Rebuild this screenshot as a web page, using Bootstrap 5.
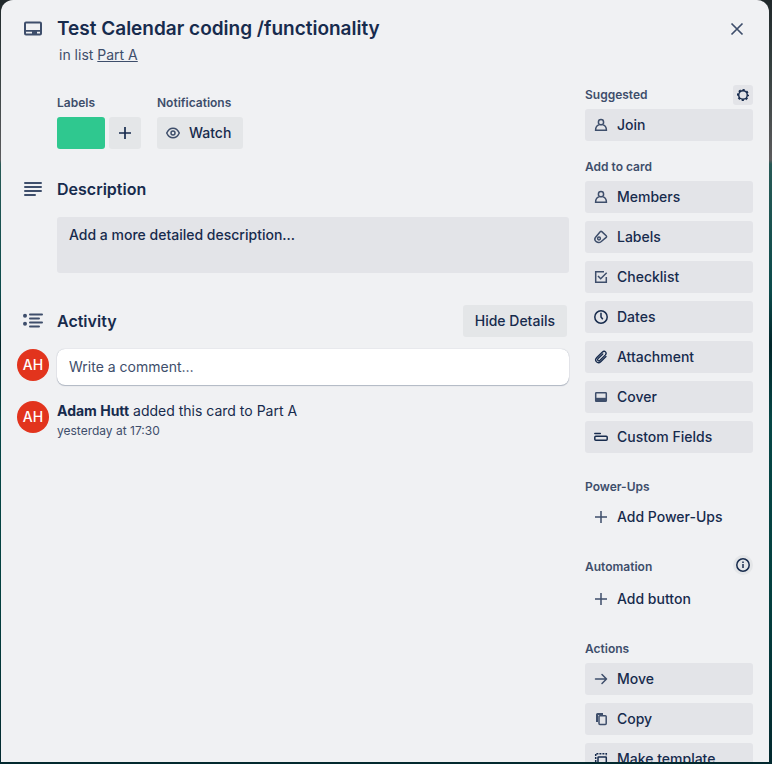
<!DOCTYPE html>
<html lang="en">
<head>
<meta charset="utf-8">
<meta name="viewport" content="width=device-width, initial-scale=1">
<title>Test Calendar coding /functionality</title>
<link rel="stylesheet" href="https://cdn.jsdelivr.net/npm/bootstrap@5.3.0/dist/css/bootstrap.min.css">
<style>
:root { --ink: #172b4d; --soft: #3e4e6b; --fill: #e3e4e8; }
body { font-family: Inter, "Liberation Sans", sans-serif; font-size: 14px; line-height: 20px; color: var(--ink);
  background: linear-gradient(180deg, #20282a 0, #35403f 65px, #5b5b5d 160px, #285a56 164px, #0c4b4b 290px, #02272b 345px, #064746 420px, #04403f 600px, #03292f 100%); }
.page { height: 100vh; padding: 0 3px 2px 1px; overflow: hidden; }
.dialog-card { height: 100%; background: #f0f1f3; border-radius: 12px 12px 0 0; padding: 17px 16px 0; overflow: hidden; }
.gutter { width: 40px; flex: none; }
.gutter-icon { padding-left: 4px; }
.card-title-text { font-size: 19px; line-height: 24px; font-weight: 600; margin: 0; }
.card-sub { line-height: 20px; padding: 4px 0 0 2px; color: var(--soft); }
.card-sub a { color: inherit; }
.close-btn { width: 32px; height: 32px; margin-top: -4px; }
.side { width: 168px; flex: none; padding-top: 20px; }
.cap { font-size: 12px; line-height: 20px; font-weight: 600; color: var(--soft); margin: 0; }
.btn-soft { --bs-btn-font-size: 14px; --bs-btn-line-height: 20px; --bs-btn-font-weight: 500; --bs-btn-color: var(--ink); --bs-btn-bg: var(--fill);
  --bs-btn-hover-bg: #d5d8de; --bs-btn-hover-color: var(--ink); --bs-btn-border-width: 0; --bs-btn-border-radius: 3px; --bs-btn-padding-y: 6px; --bs-btn-padding-x: 12px; }
.btn-bare { --bs-btn-bg: transparent; }
.btn-side { --bs-btn-padding-x: 8px; width: 100%; display: flex; align-items: center; gap: 8px; white-space: nowrap; }
.btn-main { --bs-btn-bg: #e4e6e8; }
.mini { width: 20px; height: 20px; padding: 0; display: flex; align-items: center; justify-content: center; }
.icon { display: block; flex: none; fill: none; stroke: var(--soft); stroke-width: 1.5; }
.dark { stroke: var(--ink); }
.fields { padding: 28px 0 0 40px; gap: 16px; }
.swatch { width: 48px; height: 32px; --bs-btn-bg: #2fc88f; --bs-btn-hover-bg: #28b580; }
.watch { padding-right: 12px; }
.sect { font-size: 16px; line-height: 32px; font-weight: 600; margin: 0; }
.desc { display: block; min-height: 56px; padding: 8px 12px; background: var(--fill); border-radius: 3px; font-weight: 500; color: var(--ink); text-decoration: none; }
.hide-details { margin-right: 2px; }
.comment-row { padding-top: 12px; }
.face { width: 32px; height: 32px; background: #e2341d; color: #fff; font-weight: 500; }
.comment-box { height: 36px; font-size: 14px; line-height: 20px; padding: 7px 12px 9px; border: 0; border-radius: 8px; color: var(--ink); box-shadow: 0 1px 1px #091e4240, 0 0 1px #091e424f; }
.comment-box::placeholder { color: var(--soft); opacity: 1; }
.stamp { font-size: 12px; line-height: 20px; color: var(--soft); }
.power { margin-bottom: 22px; }
.auto-row { height: 22px; margin-bottom: 6px; }
</style>
</head>
<body>
<div class="page">
<main class="dialog-card">
  <header class="d-flex">
    <div class="gutter gutter-icon">
      <svg class="icon" width="24" height="24" viewBox="0 0 24 24"><path fill="#3e4e6b" stroke="none" fill-rule="evenodd" d="M5 4.500h14a2 2 0 0 1 2 2v10a2 2 0 0 1-2 2H5a2 2 0 0 1-2-2v-10a2 2 0 0 1 2-2zm0 2V13h14V6.500zm0 8.200v1.800h6v-1.800zm11 0v1.800h3v-1.800z"/></svg>
    </div>
    <div class="flex-grow-1">
      <h1 class="card-title-text">Test Calendar coding /functionality</h1>
      <div class="card-sub">in list <a href="#">Part A</a></div>
    </div>
    <button class="btn btn-soft btn-bare close-btn p-0 d-flex align-items-center justify-content-center" aria-label="Close">
      <svg class="icon" width="16" height="16" viewBox="0 0 16 16"><path stroke-width="1.700" d="M2.500 2.500l11 11M13.500 2.500l-11 11"/></svg>
    </button>
  </header>
  <div class="d-flex gap-3">
    <div class="flex-grow-1">
      <div class="d-flex fields">
        <section>
          <h2 class="cap">Labels</h2>
          <div class="d-flex gap-1 pt-1">
            <button class="btn btn-soft swatch" aria-label="Green label"></button>
            <button class="btn btn-soft btn-main px-2" aria-label="Add label"><svg class="icon dark" width="16" height="16" viewBox="0 0 16 16"><path stroke-width="1.700" d="M8 2v12M2 8h12"/></svg></button>
          </div>
        </section>
        <section>
          <h2 class="cap">Notifications</h2>
          <div class="pt-1">
            <button class="btn btn-soft btn-main btn-side watch">
              <svg class="icon" width="16" height="16" viewBox="0 0 16 16"><path d="M1.700 8C3 5.200 5.300 3.200 8 3.200S13 5.200 14.300 8C13 10.800 10.700 12.800 8 12.800S3 10.800 1.700 8z"/><circle cx="8" cy="8" r="2"/></svg>Watch
            </button>
          </div>
        </section>
      </div>

      <section class="pt-4">
        <div class="d-flex">
          <div class="gutter gutter-icon pt-1"><svg class="icon" width="24" height="24" viewBox="0 0 24 24"><path stroke-width="2" stroke-linecap="round" d="M4 6h16M4 10h16M4 14h16M4 18h10"/></svg></div>
          <h2 class="sect">Description</h2>
        </div>
        <div class="d-flex pt-2 mt-1">
          <div class="gutter"></div>
          <a href="#" class="desc flex-grow-1">Add a more detailed description...</a>
        </div>
      </section>

      <section class="pt-4 mt-2">
        <div class="d-flex">
          <div class="gutter gutter-icon pt-1"><svg class="icon" width="24" height="24" viewBox="0 0 24 24"><g stroke-width="2" stroke-linecap="round"><path d="M9 5.500h12M9 9.500h9M9 13.500h12M9 17.500h9"/></g><g fill="#3e4e6b" stroke="none"><circle cx="4" cy="6.800" r="2"/><circle cx="4" cy="14.800" r="2"/></g></svg></div>
          <h2 class="sect flex-grow-1">Activity</h2>
          <button class="btn btn-soft btn-main hide-details">Hide Details</button>
        </div>
        <div class="d-flex comment-row">
          <div class="gutter"><div class="face rounded-circle d-flex align-items-center justify-content-center">AH</div></div>
          <input class="form-control comment-box" type="text" placeholder="Write a comment…" aria-label="Write a comment">
        </div>
        <div class="d-flex pt-3">
          <div class="gutter"><div class="face rounded-circle d-flex align-items-center justify-content-center">AH</div></div>
          <div><div><b>Adam Hutt</b> added this card to Part A</div><div class="stamp">yesterday at 17:30</div></div>
        </div>
      </section>
    </div>

    <aside class="side">
      <section class="mb-3">
        <div class="d-flex justify-content-between mb-1">
          <h2 class="cap">Suggested</h2>
          <button class="btn btn-soft mini" aria-label="Suggestion settings"><svg class="icon dark" width="16" height="16" viewBox="0 0 16 16"><circle cx="8" cy="8" r="4.300" stroke-width="1.500"/><circle cx="8" cy="8" r="5.300" stroke-width="1.500" stroke-dasharray="2.200 1.963" stroke-dashoffset="1.100"/></svg></button>
        </div>
        <button class="btn btn-soft btn-side"><svg class="icon" width="16" height="16" viewBox="0 0 16 16"><circle cx="8" cy="5.200" r="2.600"/><path d="M5.800 7.900C3.500 8.700 2.600 10.400 2.600 13.200h10.800c0-2.800-.9-4.500-3.200-5.300"/></svg>Join</button>
      </section>
      <section class="mb-4">
        <h2 class="cap mb-1">Add to card</h2>
        <div class="d-grid gap-2">
          <button class="btn btn-soft btn-side"><svg class="icon" width="16" height="16" viewBox="0 0 16 16"><circle cx="8" cy="5.200" r="2.600"/><path d="M5.800 7.900C3.500 8.700 2.600 10.400 2.600 13.200h10.800c0-2.800-.9-4.500-3.200-5.300"/></svg>Members</button>
          <button class="btn btn-soft btn-side"><svg class="icon" width="16" height="16" viewBox="0 0 16 16"><path stroke-linejoin="round" d="M2.600 8.200L7.200 2.700Q8 1.900 8.800 2.600L13.200 6.800Q14 7.600 13.200 8.400L8.300 12.500C4.900 15.200.1 11.500 2.600 8.200z"/><circle cx="6" cy="9.500" r="1.400"/></svg>Labels</button>
          <button class="btn btn-soft btn-side"><svg class="icon" width="16" height="16" viewBox="0 0 16 16"><path d="M11 2.800H2.700v10.500h10.600V8"/><path d="M5 7l2.700 2.800L13.700 3.800"/></svg>Checklist</button>
          <button class="btn btn-soft btn-side"><svg class="icon dark" width="16" height="16" viewBox="0 0 16 16"><circle cx="8" cy="8" r="6.200"/><path d="M8 3.800V8l1.800 2.300"/></svg>Dates</button>
          <button class="btn btn-soft btn-side"><svg class="icon dark" width="16" height="16" viewBox="0 0 16 16"><path stroke-width="1.300" stroke-linecap="round" d="M13 7.500l-5 5c-3.300 3.200-7.300-.8-4.200-4l5.400-5.300c2.500-2.300 5.300.5 3 2.900L7 11.200c-1.600 1.500-3.300-.2-1.900-1.700L9.800 5"/></svg>Attachment</button>
          <button class="btn btn-soft btn-side"><svg class="icon" width="16" height="16" viewBox="0 0 16 16"><rect x="2.700" y="3.700" width="10.600" height="8.600" rx=".7"/><path fill="#3e4e6b" stroke="none" d="M2.500 8.800h11v3.700h-11z"/></svg>Cover</button>
          <button class="btn btn-soft btn-side"><svg class="icon dark" width="16" height="16" viewBox="0 0 16 16"><path stroke-linecap="round" d="M1.800 4.500h5.500"/><rect x="1.800" y="7.200" width="12.400" height="4" rx="1"/></svg>Custom Fields</button>
        </div>
      </section>
      <section class="power">
        <h2 class="cap mb-1">Power-Ups</h2>
        <button class="btn btn-soft btn-bare btn-side"><svg class="icon" width="16" height="16" viewBox="0 0 16 16"><path d="M8 2v12M2 8h12"/></svg>Add Power-Ups</button>
      </section>
      <section class="mb-4">
        <div class="d-flex justify-content-between auto-row">
          <h2 class="cap align-self-end">Automation</h2>
          <button class="btn btn-soft btn-main mini rounded-circle" aria-label="About automation"><svg class="icon dark" width="16" height="16" viewBox="0 0 16 16"><circle cx="8" cy="8" r="6.200"/><path d="M8 7v4M8 4.600v1.400"/></svg></button>
        </div>
        <button class="btn btn-soft btn-bare btn-side"><svg class="icon" width="16" height="16" viewBox="0 0 16 16"><path d="M8 2v12M2 8h12"/></svg>Add button</button>
      </section>
      <section>
        <h2 class="cap mb-1">Actions</h2>
        <div class="d-grid gap-2">
          <button class="btn btn-soft btn-side"><svg class="icon" width="16" height="16" viewBox="0 0 16 16"><path stroke-linecap="round" stroke-linejoin="round" d="M2.500 8h11M9 3.500L13.500 8 9 12.500"/></svg>Move</button>
          <button class="btn btn-soft btn-side"><svg class="icon" width="16" height="16" viewBox="0 0 16 16"><path stroke-width="2" d="M4 11V3.500q0-.5.500-.5H10"/><rect x="6" y="4.700" width="7.200" height="8.800" rx=".9"/></svg>Copy</button>
          <button class="btn btn-soft btn-side"><svg class="icon dark" width="16" height="16" viewBox="0 0 16 16"><path stroke-dasharray="2 1" d="M2.700 14V2.700h10.600V5"/><rect x="5" y="6" width="8.300" height="6" rx=".6"/></svg>Make template</button>
        </div>
      </section>
    </aside>
  </div>
</main>
</div>
<script src="https://cdn.jsdelivr.net/npm/bootstrap@5.3.0/dist/js/bootstrap.bundle.min.js"></script>
</body>
</html>
